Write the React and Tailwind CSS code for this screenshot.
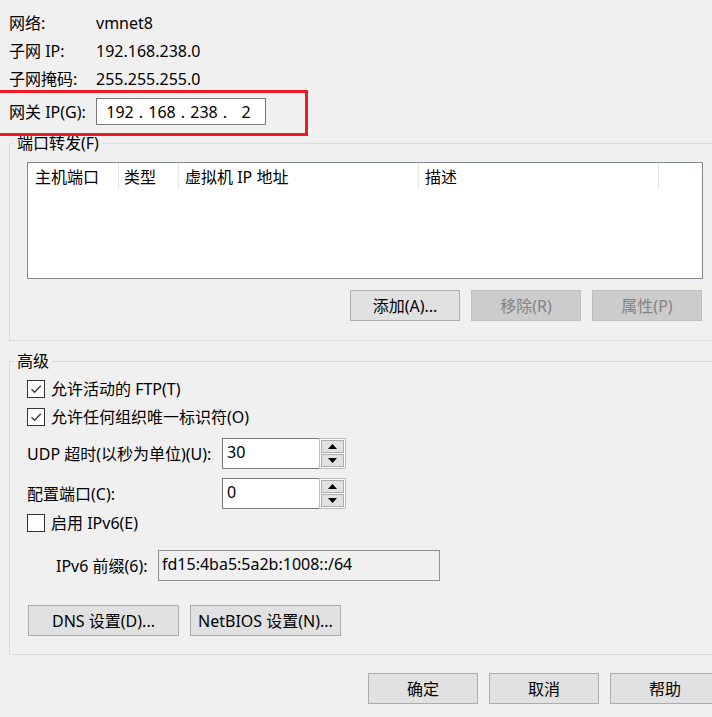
import React from "react";

const Btn = ({ children, disabled, w = "w-[110px]" }) => (
  <div
    className={`flex h-[31px] ${w} shrink-0 items-center justify-center border ${
      disabled
        ? "border-[#bfbfbf] bg-[#cccccc] text-[#838383]"
        : "border-[#adadad] bg-[#e1e1e1] text-black"
    }`}
  >
    {children}
  </div>
);

const Check = ({ checked, label }) => (
  <div className="flex h-[28px] items-center">
    <div className="flex h-[18px] w-[18px] shrink-0 items-center justify-center border border-[#333333] bg-white">
      {checked && (
        <svg width="12" height="10" viewBox="0 0 12 10">
          <path d="M1.5 5.2 L4.6 8.2 L10.8 1.8" fill="none" stroke="#3c3c3c" strokeWidth="1.4" />
        </svg>
      )}
    </div>
    <span className="ml-[6px] whitespace-nowrap">{label}</span>
  </div>
);

const Arrow = ({ up }) => (
  <svg width="9" height="5" viewBox="0 0 9 5">
    <path d={up ? "M4.5 0 L9 5 L0 5 Z" : "M0 0 L9 0 L4.5 5 Z"} fill="#000" />
  </svg>
);

const Spin = ({ value }) => (
  <div className="flex h-[31px]">
    <div className="flex w-[97px] items-center border border-r-0 border-[#7a7a7a] bg-white pb-[3px] pl-[4px]">
      {value}
    </div>
    <div className="flex w-[27px] flex-col gap-[1px] border border-[#bcbcbc] bg-white p-[1px]">
      <div className="flex flex-1 items-center justify-center border border-[#adadad] bg-[#e1e1e1]">
        <Arrow up />
      </div>
      <div className="flex flex-1 items-center justify-center border border-[#adadad] bg-[#e1e1e1]">
        <Arrow />
      </div>
    </div>
  </div>
);

const InfoRow = ({ label, value }) => (
  <div className="flex h-[28px] items-center">
    <span className="w-[87px] whitespace-nowrap">{label}</span>
    <span>{value}</span>
  </div>
);

export default function App() {
  return (
    <div className="relative h-[717px] w-[712px] overflow-hidden bg-[#f0f0f0] font-['Noto_Sans','Noto_Sans_CJK_SC',sans-serif] text-[16px] text-black">
      {/* top info */}
      <div className="pl-[9px] pt-[9px]">
        <InfoRow label="网络:" value="vmnet8" />
        <InfoRow label="子网 IP:" value="192.168.238.0" />
        <InfoRow label="子网掩码:" value="255.255.255.0" />
        <div className="mt-[5px] flex h-[27px] items-center">
          <span className="w-[87px] whitespace-nowrap">网关 IP(G):</span>
          <div className="flex h-[27px] w-[170px] items-center border border-[#7a7a7a] bg-white pl-[7px]">
            <span className="w-[32px] text-center">192</span>
            <span className="w-[10px] text-center">.</span>
            <span className="w-[32px] text-center">168</span>
            <span className="w-[10px] text-center">.</span>
            <span className="w-[32px] text-center">238</span>
            <span className="w-[10px] text-center">.</span>
            <span className="w-[32px] text-center">2</span>
          </div>
        </div>
      </div>

      {/* port forwarding */}
      <fieldset className="ml-[9px] mt-[8px] w-[720px] border border-[#dcdcdc] pb-[19px] pl-[17px] pt-[9px]">
        <legend className="ml-[-13px] px-[3px] leading-[20px]">端口转发(F)</legend>
        <div className="h-[117px] w-[676px] border border-[#828790] bg-white">
          <div className="flex h-[26px]">
            <div className="flex w-[91px] items-center border-r border-[#e5e5e5] pl-[7px] pt-[2px]">主机端口</div>
            <div className="flex w-[60px] items-center border-r border-[#e5e5e5] pl-[5px] pt-[2px]">类型</div>
            <div className="flex w-[240px] items-center border-r border-[#e5e5e5] pl-[6px] pt-[2px]">虚拟机 IP 地址</div>
            <div className="flex w-[240px] items-center border-r border-[#e5e5e5] pl-[6px] pt-[2px]">描述</div>
          </div>
        </div>
        <div className="mt-[11px] flex w-[676px] justify-end gap-[11px] pr-[1px]">
          <Btn>添加(A)...</Btn>
          <Btn disabled>移除(R)</Btn>
          <Btn disabled>属性(P)</Btn>
        </div>
      </fieldset>

      {/* advanced */}
      <fieldset className="ml-[9px] mt-[10px] w-[720px] border border-[#dcdcdc] pb-[18px] pl-[17px] pt-[4px]">
        <legend className="ml-[-13px] px-[3px] leading-[20px]">高级</legend>
        <Check checked label="允许活动的 FTP(T)" />
        <Check checked label="允许任何组织唯一标识符(O)" />
        <div className="mt-[7px] flex items-center">
          <span className="w-[195px] whitespace-nowrap">UDP 超时(以秒为单位)(U):</span>
          <Spin value="30" />
        </div>
        <div className="mt-[9px] flex items-center">
          <span className="w-[195px] whitespace-nowrap">配置端口(C):</span>
          <Spin value="0" />
        </div>
        <Check label="启用 IPv6(E)" />
        <div className="mt-[13px] flex items-center">
          <span className="w-[131px] whitespace-nowrap pl-[29px]">IPv6 前缀(6):</span>
          <div className="flex h-[31px] w-[282px] items-center border border-[#8f8f8f] bg-[#f0f0f0] pb-[4px] pl-[3px]">
            fd15:4ba5:5a2b:1008::/64
          </div>
        </div>
        <div className="ml-[1px] mt-[24px] flex gap-[11px]">
          <Btn w="w-[151px]">DNS 设置(D)...</Btn>
          <Btn w="w-[151px]">NetBIOS 设置(N)...</Btn>
        </div>
      </fieldset>

      {/* bottom buttons */}
      <div className="ml-[368px] mt-[18px] flex gap-[11px]">
        <Btn>确定</Btn>
        <Btn>取消</Btn>
        <Btn>帮助</Btn>
      </div>

      {/* red annotation box */}
      <div className="pointer-events-none absolute left-[-10px] top-[90px] h-[46px] w-[318px] border-[3px] border-[#ed1c24]" />
    </div>
  );
}
